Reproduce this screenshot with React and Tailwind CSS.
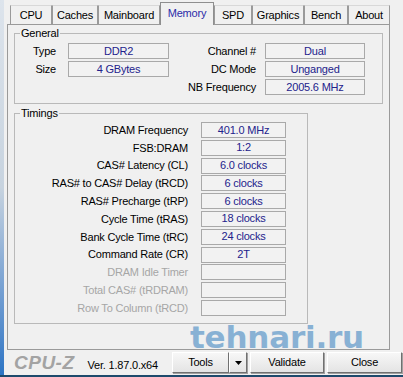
const tabs = [
  ["CPU", 42],
  ["Caches", 46],
  ["Mainboard", 62],
  ["Memory", 54],
  ["SPD", 38],
  ["Graphics", 52],
  ["Bench", 44],
  ["About", 42],
];

const timings = [
  ["DRAM Frequency", "401.0 MHz"],
  ["FSB:DRAM", "1:2"],
  ["CAS# Latency (CL)", "6.0 clocks"],
  ["RAS# to CAS# Delay (tRCD)", "6 clocks"],
  ["RAS# Precharge (tRP)", "6 clocks"],
  ["Cycle Time (tRAS)", "18 clocks"],
  ["Bank Cycle Time (tRC)", "24 clocks"],
  ["Command Rate (CR)", "2T"],
  ["DRAM Idle Timer", null],
  ["Total CAS# (tRDRAM)", null],
  ["Row To Column (tRCD)", null],
];

function Box({ children, w }) {
  return (
    <div
      className={`${w} h-[16px] border border-[#a9a9a9] bg-[#f2f2f2] flex items-center justify-center text-[#23238c] leading-none whitespace-nowrap`}
    >
      {children}
    </div>
  );
}

function GroupBox({ title, className, children }) {
  return (
    <div className={`relative border border-[#b9b9b9] ${className}`}>
      <span className="absolute left-[5px] top-[-8px] bg-[#f0f0f0] px-[1px] leading-[14px]">
        {title}
      </span>
      {children}
    </div>
  );
}

function Button({ children, className }) {
  return (
    <div
      className={`h-[21px] shrink-0 flex items-center justify-center border border-t-white border-l-white border-b-[#707070] border-r-[#707070] bg-gradient-to-b from-[#f7f7f7] to-[#e4e4e4] shadow-[1px_1px_0_#a0a0a0] ${className}`}
    >
      {children}
    </div>
  );
}

export default function App() {
  return (
    <div
      className="relative w-[403px] h-[377px] overflow-hidden bg-[#f0f0f0] text-[11px] tracking-[-0.2px] text-black flex flex-col"
      style={{ fontFamily: '"Liberation Sans", Arial, sans-serif' }}
    >
      <div className="flex flex-1">
        <div className="w-[4px] bg-gradient-to-b from-[#dde4ec] via-[#c7d3df] to-[#2b74c4]" />
        <div className="flex-1 flex flex-col">
          {/* tab strip */}
          <div className="h-[24px] flex items-end pl-[6px] relative z-10">
            {tabs.map(([name, w]) =>
              name === "Memory" ? (
                <div
                  key={name}
                  style={{ width: w }}
                  className="h-[23px] mb-[-1px] bg-[#f0f0f0] border-x border-t border-[#8e8e8e] flex items-center justify-center text-[#2b2ba8] pb-[1px]"
                >
                  {name}
                </div>
              ) : (
                <div
                  key={name}
                  style={{ width: w }}
                  className="h-[19px] border-x border-t border-[#9a9a9a] border-t-[#d8d8d8] flex items-center justify-center"
                >
                  {name}
                </div>
              )
            )}
          </div>

          {/* panel */}
          <div className="ml-[3px] w-[383px] h-[326px] border border-[#9a9a9a] px-[6px] pt-[8px]">
            <GroupBox title="General" className="h-[71px] pt-[9px]">
              <div className="flex">
                <div className="flex flex-col gap-[2px]">
                  {[
                    ["Type", "DDR2"],
                    ["Size", "4 GBytes"],
                  ].map(([l, v]) => (
                    <div key={l} className="flex items-center h-[16px]">
                      <span className="w-[41px] text-right">{l}</span>
                      <div className="ml-[12px]">
                        <Box w="w-[101px]">{v}</Box>
                      </div>
                    </div>
                  ))}
                </div>
                <div className="ml-auto mr-[17px] flex flex-col gap-[2px] items-end">
                  {[
                    ["Channel #", "Dual"],
                    ["DC Mode", "Unganged"],
                    ["NB Frequency", "2005.6 MHz"],
                  ].map(([l, v]) => (
                    <div key={l} className="flex items-center h-[16px]">
                      <span className="text-right whitespace-nowrap">{l}</span>
                      <div className="ml-[9px]">
                        <Box w="w-[100px]">{v}</Box>
                      </div>
                    </div>
                  ))}
                </div>
              </div>
            </GroupBox>

            <GroupBox title="Timings" className="mt-[9px] w-[294px] h-[211px] pt-[8px]">
              <div className="flex flex-col gap-[1.8px]">
                {timings.map(([l, v]) => (
                  <div key={l} className="flex items-center h-[16px]">
                    <span
                      className={`w-[173px] text-right whitespace-nowrap ${
                        v === null ? "text-[#a6a6a6]" : "text-black"
                      }`}
                    >
                      {l}
                    </span>
                    <div className="ml-[13px]">
                      <Box w="w-[85px]">{v}</Box>
                    </div>
                  </div>
                ))}
              </div>
            </GroupBox>
          </div>

          {/* bottom bar */}
          <div className="h-[25px] flex items-center whitespace-nowrap">
            <span className="ml-[10px] shrink-0 text-[19px] font-bold italic text-[#a3a3a3] leading-none tracking-[0.5px]">
              CPU-Z
            </span>
            <span className="ml-[13px] shrink-0 mt-[5px]">Ver. 1.87.0.x64</span>
            <div className="ml-auto flex">
              <Button className="w-[57px]">Tools</Button>
              <Button className="w-[18px]">
                <svg width="7" height="4" viewBox="0 0 7 4">
                  <path d="M0 0h7L3.5 4z" fill="#000" />
                </svg>
              </Button>
            </div>
            <Button className="ml-[3px] w-[74px]">Validate</Button>
            <Button className="ml-[3px] w-[75px] mr-[1px]">Close</Button>
          </div>
        </div>
      </div>
      <div className="h-[3px] bg-[#1d4a6c]" />

      {/* watermark */}
      <span
        className="absolute left-[190px] top-[322px] text-[31px] font-bold text-[#5d97c9] opacity-70 leading-none pointer-events-none"
        style={{ fontFamily: '"DejaVu Sans", sans-serif' }}
      >
        tehnari.ru
      </span>
    </div>
  );
}
